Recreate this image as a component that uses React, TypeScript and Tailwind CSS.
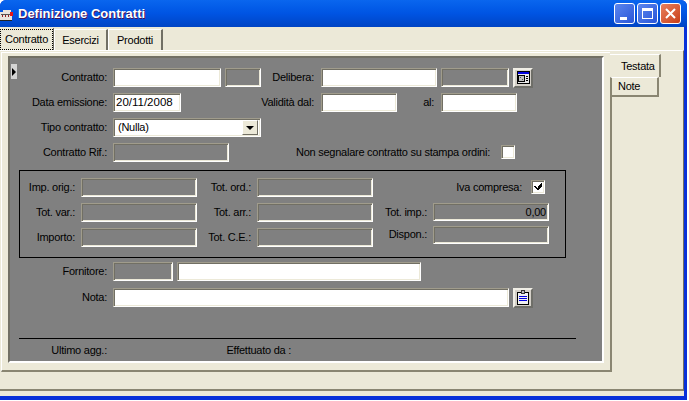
import React from "react";

const sunken =
  "border border-t-[#a09c8c] border-l-[#a09c8c] border-r-white border-b-white shadow-[inset_1px_1px_0_#716f64,inset_-1px_-1px_0_#ece9d8]";

function Box({ w, h = "h-[19px]", white, ml, children, right, extra }: { w: string; h?: string; white?: boolean; ml?: string; children?: React.ReactNode; right?: boolean; extra?: string }) {
  return (
    <div
      className={`${w} ${h} ${ml ?? ""} ${extra ?? ""} ${sunken} shrink-0 flex items-center leading-none text-[11px] tracking-[-0.25px] text-black pl-[2px] pr-[2px] ${white ? "bg-white" : "bg-[#808080]"} ${right ? "justify-end" : ""}`}
    >
      {children}
    </div>
  );
}

function Label({ w, children, cls }: { w: string; children: React.ReactNode; cls?: string }) {
  return <div className={`${w} ${cls ?? ""} shrink-0 text-right text-[11px] tracking-[-0.25px] leading-none text-black whitespace-nowrap`}>{children}</div>;
}

function Check({ checked, ml }: { checked?: boolean; ml: string }) {
  return (
    <div className={`w-[14px] h-[14px] ${ml} mb-[2px] shrink-0 ${sunken} bg-white flex items-center justify-center`}>
      {checked && (
        <svg width="9" height="8" viewBox="0 0 9 8" shapeRendering="crispEdges">
          <path d="M0 3h2v1h1v1h1V3h1V2h1V1h1V0h1v3H8v1H7v1H6v1H5v1H3V6H2V5H1V4H0z" fill="#000" />
        </svg>
      )}
    </div>
  );
}

function ToolBtn({ children, ml }: { children: React.ReactNode; ml: string }) {
  return (
    <div className={`w-[20px] h-[20px] ${ml} shrink-0 bg-[#d4d0c8] border-2 border-t-[#f0eee6] border-l-[#f0eee6] border-r-[#6e6e68] border-b-[#6e6e68] flex items-center justify-center`}>
      {children}
    </div>
  );
}

function CalIcon() {
  return (
    <svg width="13" height="13" viewBox="0 0 13 13" shapeRendering="crispEdges" className="shrink-0">
      <rect x="0" y="0" width="13" height="13" fill="#000" />
      <rect x="1" y="1" width="11" height="2" fill="#0000e0" />
      <rect x="1" y="3" width="11" height="9" fill="#e8e8e8" />
      <rect x="1" y="4" width="7" height="7" fill="#000" />
      <rect x="2" y="5" width="5" height="5" fill="#c0c0c0" />
      <rect x="3" y="6" width="1" height="1" fill="#555" />
      <rect x="5" y="8" width="1" height="1" fill="#555" />
      <rect x="9" y="5" width="2" height="1" fill="#000" />
      <rect x="9" y="7" width="2" height="1" fill="#000" />
      <rect x="9" y="9" width="2" height="1" fill="#000" />
    </svg>
  );
}

function ClipIcon() {
  return (
    <svg width="12" height="15" viewBox="0 0 12 15" shapeRendering="crispEdges" className="shrink-0">
      <rect x="0" y="2" width="12" height="13" fill="#000" />
      <rect x="1" y="3" width="10" height="11" fill="#f0f0f0" />
      <rect x="4" y="0" width="4" height="4" fill="#333" />
      <rect x="5" y="1" width="2" height="2" fill="#bbb" />
      <rect x="2" y="6" width="8" height="1" fill="#0000e0" />
      <rect x="2" y="8" width="8" height="1" fill="#0000e0" />
      <rect x="2" y="10" width="8" height="1" fill="#0000e0" />
    </svg>
  );
}

export default function App() {
  return (
    <div className="w-[689px] h-[401px] bg-white overflow-hidden [font-family:'Liberation_Sans',Arial,sans-serif]">
      <div className="w-[687px] h-[400px] flex flex-col bg-[#0831d9] rounded-t-[6px] overflow-hidden">
        {/* title bar */}
        <div className="h-[27px] shrink-0 flex items-center bg-gradient-to-b from-[#0a66ee] via-[#0054e3] to-[#0044c4]">
          <svg width="16" height="16" viewBox="0 0 16 16" className="shrink-0 mt-[2px]" shapeRendering="crispEdges">
            <path d="M0 5h3V3h8v2h1v8H0z" fill="#e8e4dc" />
            <path d="M0 13h12v1H0z" fill="#222" />
            <rect x="1" y="7" width="9" height="1" fill="#555" />
            <rect x="2" y="8" width="1" height="2" fill="#902020" />
            <rect x="5" y="8" width="1" height="2" fill="#902020" />
            <rect x="8" y="8" width="1" height="2" fill="#902020" />
            <rect x="10" y="5" width="3" height="4" fill="#e01818" />
          </svg>
          <div className="ml-[2px] text-[13px] font-bold text-white leading-none [text-shadow:1px_1px_0_#4a1458] whitespace-nowrap">Definizione Contratti</div>
          <div className="ml-auto mr-[6px] flex gap-[2px]">
            <div className="w-[21px] h-[21px] rounded-[3px] border border-white bg-gradient-to-br from-[#5c86ee] to-[#2a55d8] flex items-end pl-[5px] pb-[3px]">
              <div className="w-[7px] h-[3px] bg-white" />
            </div>
            <div className="w-[21px] h-[21px] rounded-[3px] border border-white bg-gradient-to-br from-[#5c86ee] to-[#2a55d8] flex items-center justify-center">
              <div className="w-[11px] h-[11px] border border-white border-t-[3px]" />
            </div>
            <div className="w-[21px] h-[21px] rounded-[3px] border border-white bg-gradient-to-br from-[#e8805c] to-[#c83c14] flex items-center justify-center">
              <svg width="13" height="13" viewBox="0 0 13 13">
                <path d="M2 2 L11 11 M11 2 L2 11" stroke="#fff" strokeWidth="2" />
              </svg>
            </div>
          </div>
        </div>

        {/* client */}
        <div className="h-[369px] shrink-0 w-[684px] bg-[#ece9d8] flex flex-col">
          {/* top tabs */}
          <div className="h-[23px] shrink-0 flex items-end text-[11px] tracking-[-0.25px] leading-none text-black">
            <div className="w-[54px] h-[22px] border-r border-r-[#716f64] flex items-center justify-center">
              <span className="w-[53px] h-[21px] border border-dotted border-black flex items-center justify-center">Contratto</span>
            </div>
            <div className="w-[54px] h-[21px] border-t border-l border-r-2 border-t-white border-l-white border-r-[#716f64] flex items-center justify-center">Esercizi</div>
            <div className="w-[55px] h-[21px] ml-[0px] border-t border-l border-r-2 border-t-white border-l-white border-r-[#716f64] flex items-center justify-center">Prodotti</div>
          </div>

          {/* outer pane */}
          <div className="h-[341px] shrink-0 border-t border-t-white border-b-2 border-b-[#8a8672] border-r border-r-[#716f64] pl-[1px] pt-[1px] flex items-start">
            {/* sheet */}
            <div className="w-[609px] h-[320px] shrink-0 border-t border-l border-b-2 border-t-white border-l-white border-b-[#8a8672] pl-[6px] pt-[3px]">
              <div className="w-[596px] h-[307px] flex flex-col bg-[#808080] border-2 border-t-[#716f64] border-l-[#716f64] border-r-white border-b-white relative">
                <div className="absolute left-[1px] top-[6px] w-[6px] h-[15px] bg-[#d4d4d4] flex items-center">
                  <div className="w-0 h-0 border-y-[4px] border-y-transparent border-l-[4px] border-l-black ml-[1px]" />
                </div>

                <div className="flex items-center mt-[10px] h-[19px]">
                  <Label w="w-[97px]">Contratto:</Label>
                  <Box w="w-[108px]" white ml="ml-[6px]" />
                  <Box w="w-[36px]" ml="ml-[4px]" />
                  <Label w="w-[53px]">Delibera:</Label>
                  <Box w="w-[116px]" white ml="ml-[7px]" />
                  <Box w="w-[68px]" ml="ml-[4px]" />
                  <ToolBtn ml="ml-[4px]"><CalIcon /></ToolBtn>
                </div>
                <div className="flex items-center mt-[6px] h-[19px]">
                  <Label w="w-[97px]">Data emissione:</Label>
                  <Box w="w-[68px]" white ml="ml-[6px]"><span className="text-[11.5px] tracking-normal">20/11/2008</span></Box>
                  <Label w="w-[133px]">Validità dal:</Label>
                  <Box w="w-[76px]" white ml="ml-[7px]" />
                  <Label w="w-[37px]">al:</Label>
                  <Box w="w-[76px]" white ml="ml-[7px]" />
                </div>
                <div className="flex items-center mt-[6px] h-[19px]">
                  <Label w="w-[97px]">Tipo contratto:</Label>
                  <Box w="w-[148px]" white ml="ml-[6px]">
                    <span className="ml-[2px]">(Nulla)</span>
                    <div className="ml-auto w-[16px] h-[15px] bg-[#ece9d8] border border-t-white border-l-white border-r-[#716f64] border-b-[#716f64] flex items-center justify-center">
                      <div className="w-0 h-0 border-x-[4px] border-x-transparent border-t-[4px] border-t-black" />
                    </div>
                  </Box>
                </div>
                <div className="flex items-center mt-[6px] h-[19px]">
                  <Label w="w-[97px]">Contratto Rif.:</Label>
                  <Box w="w-[116px]" ml="ml-[6px]" />
                  <Label w="w-[261px]">Non segnalare contratto su stampa ordini:</Label>
                  <Check ml="ml-[11px]" />
                </div>

                {/* group */}
                <div className="ml-[9px] mt-[8px] w-[547px] h-[88px] shrink-0 border border-black flex flex-col">
                  <div className="flex items-center mt-[7px] h-[19px]">
                    <Label w="w-[55px]">Imp. orig.:</Label>
                    <Box w="w-[116px]" ml="ml-[6px]" />
                    <Label w="w-[54px]">Tot. ord.:</Label>
                    <Box w="w-[116px]" ml="ml-[6px]" />
                    <Label w="w-[149px]">Iva compresa:</Label>
                    <Check ml="ml-[9px]" checked />
                  </div>
                  <div className="flex items-center mt-[6px] h-[19px]">
                    <Label w="w-[55px]">Tot. var.:</Label>
                    <Box w="w-[116px]" ml="ml-[6px]" />
                    <Label w="w-[54px]">Tot. arr.:</Label>
                    <Box w="w-[116px]" ml="ml-[6px]" />
                    <Label w="w-[54px]">Tot. imp.:</Label>
                    <Box w="w-[116px]" h="h-[18px]" ml="ml-[6px]" right extra="self-start">0,00</Box>
                  </div>
                  <div className="flex items-center mt-[6px] h-[19px]">
                    <Label w="w-[55px]">Importo:</Label>
                    <Box w="w-[116px]" ml="ml-[6px]" />
                    <Label w="w-[54px]">Tot. C.E.:</Label>
                    <Box w="w-[116px]" ml="ml-[6px]" />
                    <Label w="w-[54px]" cls="-translate-y-[3px]">Dispon.:</Label>
                    <Box w="w-[116px]" h="h-[18px]" ml="ml-[6px]" extra="self-start -mt-[2px]" />
                  </div>
                </div>

                <div className="flex items-center mt-[4px] h-[19px]">
                  <Label w="w-[97px]">Fornitore:</Label>
                  <Box w="w-[60px]" ml="ml-[6px]" />
                  <Box w="w-[244px]" white ml="ml-[4px]" />
                </div>
                <div className="flex items-center mt-[7px] h-[19px]">
                  <Label w="w-[97px]">Nota:</Label>
                  <Box w="w-[396px]" white ml="ml-[6px]" />
                  <ToolBtn ml="ml-[4px]"><ClipIcon /></ToolBtn>
                </div>

                <div className="ml-[9px] mt-[31px] w-[557px] h-[1px] bg-black shrink-0" />
                <div className="flex items-center mt-[4px] h-[14px]">
                  <Label w="w-[97px]">Ultimo agg.:</Label>
                  <Label w="w-[184px]">Effettuato da :</Label>
                </div>
              </div>
            </div>

            {/* right tabs */}
            <div className="w-[51px] h-[320px] shrink-0 flex flex-col text-[11px] tracking-[-0.25px] leading-none text-black">
              <div className="mt-[2px] h-[23px] shrink-0 border-t border-r-2 border-t-white border-r-[#8a8672] flex items-center pl-[11px]">Testata</div>
              <div className="w-[49px] h-[20px] shrink-0 border-t border-l-2 border-r-2 border-b-2 border-t-white border-l-[#8a8672] border-r-[#8a8672] border-b-[#8a8672] flex items-center pl-[6px]">Note</div>
              <div className="w-[2px] flex-1 bg-[#8a8672]" />
            </div>
          </div>
        </div>
      </div>
    </div>
  );
}
